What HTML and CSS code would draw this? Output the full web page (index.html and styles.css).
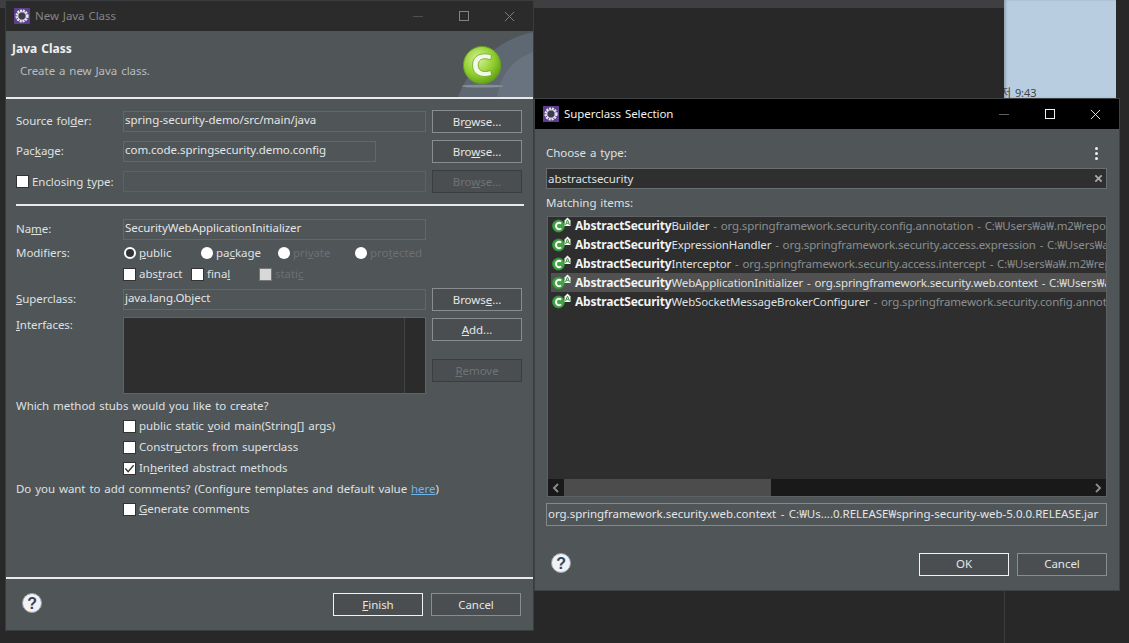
FILE: index.html
```html
<!DOCTYPE html>
<html lang="en">
<head>
<meta charset="utf-8">
<title>New Java Class</title>
<link rel="stylesheet" href="styles.css">
</head>
<body>
<div class="desktop">
  <div class="top-strip"></div>
  <div class="note"><span class="note-time">저 9:43</span></div>
  <div class="vline"></div>

  <section class="window win-class">
    <header class="titlebar titlebar-off">
      <svg class="app-icon" viewBox="0 0 16 16"><rect width="16" height="16" fill="#5b3f8c"/><circle cx="8" cy="8" r="5.4" fill="none" stroke="#e8e8e8" stroke-width="2.4" stroke-dasharray="2 .85"/><circle cx="8" cy="8" r="4.2" fill="#3c3c52" stroke="#f0f0f0" stroke-width="1"/></svg>
      <span class="title-text">New Java Class</span>
      <span class="controls"><i class="ctl-min"></i><i class="ctl-max"></i><svg class="ctl-x" viewBox="0 0 12 12"><path d="M1 1 11 11M11 1 1 11" stroke="currentColor" fill="none"/></svg></span>
    </header>
    <div class="banner">
      <svg class="banner-art" viewBox="0 0 80 66"><path d="M5 66C15 40 40 10 80 1V66Z" fill="#5e6872"/><path d="M44 66C46 50 55 30 80 21V66Z" fill="#69737f"/></svg>
      <div class="banner-text">
        <h1>Java Class</h1>
        <p>Create a new Java class.</p>
      </div>
      <svg class="banner-icon" viewBox="0 0 44 46">
        <defs><radialGradient id="g" cx=".4" cy=".35" r=".7"><stop offset="0" stop-color="#d8f39a"/><stop offset=".6" stop-color="#8fce2c"/><stop offset="1" stop-color="#5c9c14"/></radialGradient></defs>
        <ellipse cx="21" cy="42" rx="22" ry="1.500" fill="#9a9fa0" opacity=".7"/>
        <circle cx="21" cy="20" r="19.5" fill="url(#g)" stroke="#6aa01c"/>
        <path d="M31 9.5C22 6 11 9 11 20S22 34 31 30.5L30 25.5C24 28 17 27 17 20S24 12 30 14.5Z" fill="#f1f8e6" stroke="#6aa01c" stroke-width=".8"/>
      </svg>
    </div>
    <div class="rule-white"></div>
    <div class="form">
      <div class="row row-first">
        <label class="lbl">Source fol<u>d</u>er:</label>
        <div class="field">spring-security-demo/src/main/java</div>
        <button class="btn">Br<u>o</u>wse...</button>
      </div>
      <div class="row">
        <label class="lbl">Pac<u>k</u>age:</label>
        <div class="field field-short">com.code.springsecurity.demo.config</div>
        <button class="btn">Bro<u>w</u>se...</button>
      </div>
      <div class="row">
        <label class="check-lbl"><i class="box"></i><span>Enclosing <u>t</u>ype:</span></label>
        <div class="field field-off"></div>
        <button class="btn btn-off">Bro<u>w</u>se...</button>
      </div>
      <div class="divider"></div>
      <div class="row row-name">
        <label class="lbl">Na<u>m</u>e:</label>
        <div class="field">SecurityWebApplicationInitializer</div>
      </div>
      <div class="row-mod">
        <label class="lbl-plain">Modifiers:</label>
        <div class="mods">
          <span class="opt opt-a"><i class="radio radio-on"></i><span><u>p</u>ublic</span></span>
          <span class="opt opt-a"><i class="radio"></i><span>pa<u>c</u>kage</span></span>
          <span class="opt opt-a off"><i class="radio"></i><span>pri<u>v</u>ate</span></span>
          <span class="opt opt-a off"><i class="radio"></i><span>pro<u>t</u>ected</span></span>
        </div>
      </div>
      <div class="row-mod2">
        <span class="lbl-plain"></span>
        <div class="mods">
          <span class="opt opt-b"><i class="box"></i><span>abs<u>t</u>ract</span></span>
          <span class="opt opt-b"><i class="box"></i><span>fina<u>l</u></span></span>
          <span class="opt opt-b off"><i class="box box-off"></i><span>stati<u>c</u></span></span>
        </div>
      </div>
      <div class="row row-super">
        <label class="lbl"><u>S</u>uperclass:</label>
        <div class="field">java.lang.Object</div>
        <button class="btn">Brows<u>e</u>...</button>
      </div>
      <div class="row-iface">
        <label class="lbl-plain"><u>I</u>nterfaces:</label>
        <div class="listbox"><div class="listbar"></div></div>
        <div class="btn-col">
          <button class="btn"><u>A</u>dd...</button>
          <button class="btn btn-off"><u>R</u>emove</button>
        </div>
      </div>
      <p class="line line-q">Which method stubs would you like to create?</p>
      <div class="checks">
        <span class="opt"><i class="box"></i><span>public static <u>v</u>oid main(String[] args)</span></span>
        <span class="opt"><i class="box"></i><span>Constr<u>u</u>ctors from superclass</span></span>
        <span class="opt"><i class="box box-on"><svg viewBox="0 0 12 12"><path d="M1.5 6 4.5 9.5 10.5 2.5" fill="none" stroke="#333" stroke-width="1.4"/></svg></i><span>In<u>h</u>erited abstract methods</span></span>
      </div>
      <p class="line line-c">Do you want to add comments? (Configure templates and default value <a class="link">here</a>)</p>
      <div class="checks checks-c">
        <span class="opt"><i class="box"></i><span><u>G</u>enerate comments</span></span>
      </div>
    </div>
    <div class="rule-white"></div>
    <footer class="foot">
      <svg class="help" viewBox="0 0 20 20"><circle cx="10" cy="10" r="9.500" fill="#f0f2f5" stroke="#9aa0a6"/><text x="10" y="15.500" class="help-q">?</text></svg>
      <div class="foot-btns">
        <button class="btn btn-def"><u>F</u>inish</button>
        <button class="btn">Cancel</button>
      </div>
    </footer>
  </section>

  <section class="window win-super">
    <header class="titlebar titlebar-on">
      <svg class="app-icon" viewBox="0 0 16 16"><rect width="16" height="16" fill="#5b3f8c"/><circle cx="8" cy="8" r="5.4" fill="none" stroke="#e8e8e8" stroke-width="2.4" stroke-dasharray="2 .85"/><circle cx="8" cy="8" r="4.2" fill="#3c3c52" stroke="#f0f0f0" stroke-width="1"/></svg>
      <span class="title-text">Superclass Selection</span>
      <span class="controls"><i class="ctl-min"></i><i class="ctl-max"></i><svg class="ctl-x" viewBox="0 0 12 12"><path d="M1 1 11 11M11 1 1 11" stroke="currentColor" fill="none"/></svg></span>
    </header>
    <div class="sel-body">
      <div class="choose"><span>Choose a type:</span><span class="dots"><i></i><i></i><i></i></span></div>
      <div class="search"><span>abstractsecurity</span><svg class="clear" viewBox="0 0 10 10"><path d="M1.5 1.5 8.5 8.5M8.5 1.5 1.5 8.5" stroke="#a8a8a8" stroke-width="2"/></svg></div>
      <p class="match-lbl">Matching items:</p>
      <div class="results">
        <ul class="items">
          <li class="item"><svg class="cls" viewBox="0 0 22 16"><use href="#cls-icon"/></svg><b>AbstractSecurity</b><span>Builder</span><em> - org.springframework.security.config.annotation - C:₩Users₩a₩.m2₩repository₩org</em></li>
          <li class="item"><svg class="cls" viewBox="0 0 22 16"><use href="#cls-icon"/></svg><b>AbstractSecurity</b><span>ExpressionHandler</span><em> - org.springframework.security.access.expression - C:₩Users₩a₩.m2₩repository</em></li>
          <li class="item"><svg class="cls" viewBox="0 0 22 16"><use href="#cls-icon"/></svg><b>AbstractSecurity</b><span>Interceptor</span><em> - org.springframework.security.access.intercept - C:₩Users₩a₩.m2₩repository₩org</em></li>
          <li class="item item-sel"><svg class="cls" viewBox="0 0 22 16"><use href="#cls-icon"/></svg><b>AbstractSecurity</b><span>WebApplicationInitializer</span><em> - org.springframework.security.web.context - C:₩Users₩a₩.m2₩repository₩org</em></li>
          <li class="item"><svg class="cls" viewBox="0 0 22 16"><use href="#cls-icon"/></svg><b>AbstractSecurity</b><span>WebSocketMessageBrokerConfigurer</span><em> - org.springframework.security.config.annotation.web</em></li>
        </ul>
        <div class="hscroll">
          <svg class="arrow" viewBox="0 0 16 16"><path d="M10 4 6 8 10 12" fill="none" stroke="#8a8a8a" stroke-width="2"/></svg>
          <div class="track"><div class="thumb"></div></div>
          <svg class="arrow" viewBox="0 0 16 16"><path d="M6 4 10 8 6 12" fill="none" stroke="#8a8a8a" stroke-width="2"/></svg>
        </div>
      </div>
      <div class="status">org.springframework.security.web.context - C:₩Us....0.RELEASE₩spring-security-web-5.0.0.RELEASE.jar</div>
      <footer class="sel-foot">
        <svg class="help" viewBox="0 0 20 20"><circle cx="10" cy="10" r="9.500" fill="#f0f2f5" stroke="#9aa0a6"/><text x="10" y="15.500" class="help-q">?</text></svg>
        <div class="sel-btns">
          <button class="btn btn-def">OK</button>
          <button class="btn">Cancel</button>
        </div>
      </footer>
    </div>
  </section>

  <svg class="defs" width="0" height="0"><defs><g id="cls-icon"><circle cx="6.500" cy="9" r="6.500" fill="#2f8a35"/><circle cx="6.500" cy="9" r="5.500" fill="#46a247"/><path d="M9.200 6.500C6.800 5 4 6.300 4 9S6.800 13 9.200 11.500" fill="none" stroke="#fff" stroke-width="2"/><path d="M15.500 .5 12.500 3.500V9H18.500V3.500Z" fill="#f4f4f4"/><path d="M13.500 8 15.500 3 17.500 8M14.300 6.300H16.700" fill="none" stroke="#3f9a3b" stroke-width="1"/></g></defs></svg>
</div>
</body>
</html>
```
FILE: styles.css
```css
* { box-sizing: border-box; }
html, body { margin: 0; padding: 0; }
body { width: 1129px; height: 643px; overflow: hidden; background: #282828; font-family: "Noto Sans", "Noto Sans CJK KR", sans-serif; font-size: 11.5px; letter-spacing: -.05px; word-spacing: 1px; color: #dfe1e2; }
.desktop { position: relative; width: 1129px; height: 643px; overflow: hidden; }
.defs { position: absolute; }
.top-strip { height: 8px; width: 1004px; background: #3f3f41; }
.note { position: absolute; left: 1004px; top: 0; width: 112px; height: 98px; background: #b9cde0; overflow: hidden; box-shadow: inset 2px 0 2px #9aa9b8; }
.note-time { position: absolute; left: -3px; top: 86px; font-size: 11px; color: #444; line-height: 14px; white-space: nowrap; }
.vline { position: absolute; left: 1004px; top: 98px; width: 1px; height: 545px; background: #3c3c3c; }

.window { position: absolute; background: #505558; border: 1px solid #3a3d3f; display: flex; flex-direction: column; }
.win-class { left: 5px; top: 0; width: 529px; height: 631px; }
.win-super { left: 534px; top: 98px; width: 586px; height: 493px; border-color: #3f4244; }

.titlebar { height: 30px; flex: none; display: flex; align-items: center; padding-left: 8px; }
.titlebar-off { background: #2b2b2b; color: #858585; }
.titlebar-on { background: #000; color: #f0f0f0; }
.app-icon { width: 16px; height: 16px; flex: none; }
.title-text { margin-left: 5px; padding-bottom: 2px; }
.controls { margin-left: auto; display: flex; align-items: center; color: inherit; }
.ctl-min { display: block; width: 10px; height: 1px; background: currentColor; opacity: .4; margin-right: 36px; }
.ctl-max { display: block; width: 10px; height: 10px; border: 1px solid currentColor; margin-right: 35px; }
.ctl-x { display: block; width: 11px; height: 11px; margin-right: 18px; }

.banner { position: relative; height: 66px; flex: none; background: #505558; padding: 10px 6px 0 6px; overflow: hidden; }
.banner-art { position: absolute; right: 0; top: 0; width: 80px; height: 66px; }
.banner-text { position: relative; }
.banner-text h1 { margin: 0; font-size: 12px; line-height: 16px; font-weight: 700; color: #f0f0f0; letter-spacing: 0; }
.banner-text p { margin: 6px 0 0 8px; line-height: 16px; color: #b9bdbf; }
.banner-icon { position: absolute; left: 456px; top: 15px; width: 42px; height: 44px; }
.rule-white { height: 2px; flex: none; background: #eaeaea; }

.form { flex: 1; padding: 0 10px; min-height: 0; }
.row { display: grid; grid-template-columns: 107px 303px 96px; height: 23px; margin-top: 7px; align-items: stretch; }
.row-first { margin-top: 11px; }
.row .btn { margin-left: 6px; }
.lbl { display: block; line-height: 22px; white-space: nowrap; }
.lbl-plain { display: block; line-height: 16px; white-space: nowrap; }
.check-lbl { display: flex; align-items: center; line-height: 16px; white-space: nowrap; }
.check-lbl .box { margin-right: 3px; }
.field { height: 21px; margin-top: 1px; border: 1px solid #626769; background: #505558; line-height: 15px; padding: 0 1px; white-space: nowrap; overflow: hidden; color: #e4e6e7; }
.field-short { width: 253px; }
.field-off { border-color: #5c6163; }
.btn { font: inherit; letter-spacing: inherit; color: #e4e6e7; background: #4a4e50; border: 1px solid #898d8f; height: 23px; width: 90px; padding: 0; line-height: 16px; }
.btn-off { color: #6f7376; border-color: #3b3e40; }
.btn-def { border-color: #f2f2f2; }

.divider { height: 2px; background: #e8e8e8; margin-top: 11px; margin-right: -1px; }
.row-name { margin-top: 12px; grid-template-columns: 107px 303px; }
.row-mod { display: grid; grid-template-columns: 107px 1fr; height: 16px; margin-top: 4px; }
.row-mod2 { display: grid; grid-template-columns: 107px 1fr; height: 16px; margin-top: 5px; }
.mods { display: flex; }
.opt { display: flex; align-items: center; height: 16px; line-height: 16px; white-space: nowrap; }
.opt.off { color: #6c7073; }
.opt-a { width: 77px; }
.opt-b { width: 68px; }
.box { display: block; flex: none; width: 13px; height: 13px; background: #fff; border: 1px solid #333; margin-right: 3px; }
.box-off { background: #d8d8d8; border-color: #777; }
.box svg { display: block; width: 11px; height: 11px; }
.radio { display: block; flex: none; width: 12px; height: 12px; border-radius: 50%; background: #fff; margin: 0 3px 0 1px; }
.radio-on { background: #333; border: 2px solid #fff; }
.row-super { margin-top: 6px; }
.row-iface { display: grid; grid-template-columns: 107px 303px 96px; margin-top: 6px; height: 77px; }
.listbox { background: #2e2e2e; border: 1px solid #5f6466; display: flex; justify-content: flex-end; }
.listbar { width: 21px; border-left: 1px solid #3f4448; background: #2b2b2b; }
.btn-col { display: flex; flex-direction: column; gap: 18px; padding: 1px 0 0 6px; }
.line { margin: 0; line-height: 16px; white-space: nowrap; }
.line-q { margin-top: 4px; }
.line-c { margin-top: 5px; }
.checks { display: flex; flex-direction: column; gap: 5px; margin-left: 107px; margin-top: 4px; }
.checks-c { margin-top: 4px; }
.link { color: #6fb3e8; text-decoration: underline; }
.foot { height: 51px; flex: none; display: flex; align-items: center; padding: 0 12px 0 16px; }
.help { width: 20px; height: 20px; flex: none; display: block; }
.foot .help { margin-top: -4px; }
.help-q { font-family: "Liberation Sans", sans-serif; font-weight: 700; font-size: 16px; text-anchor: middle; fill: #38425a; }
.foot-btns { margin-left: auto; display: flex; gap: 8px; }

.sel-body { flex: 1; min-height: 0; padding: 0 12px 0 11px; display: flex; flex-direction: column; }
.choose { display: flex; justify-content: space-between; align-items: center; height: 16px; margin-top: 16px; line-height: 16px; }
.dots { display: flex; flex-direction: column; gap: 2px; margin-right: 9px; }
.dots i { display: block; width: 3px; height: 3px; border-radius: 50%; background: #f0f0f0; }
.search { height: 21px; margin-top: 7px; background: #2f2f2f; border: 1px solid #696e70; display: flex; align-items: center; justify-content: space-between; padding: 0 3px 0 1px; }
.search span { line-height: 17px; padding-bottom: 1px; }
.clear { width: 9px; height: 9px; }
.match-lbl { margin: 6px 0 0; line-height: 16px; height: 16px; }
.results { height: 281px; margin: 5px 0 0 1px; background: #2e2e2e; border: 1px solid #5c6163; display: flex; flex-direction: column; }
.items { list-style: none; margin: -1px 0 0; padding: 0 0 0 3px; flex: 1; overflow: hidden; }
.item { height: 19px; line-height: 18px; white-space: nowrap; display: flex; align-items: center; padding-left: 1px; overflow: hidden; }
.item b { font-weight: 700; font-size: 12px; color: #f2f2f2; letter-spacing: -.2px; }
.item span { color: #dfe1e2; letter-spacing: -.12px; }
.item em { font-style: normal; color: #8a8e90; white-space: pre; letter-spacing: -.14px; }
.item-sel { background: #515151; }
.item-sel em { color: #dfe1e2; }
.cls { width: 22px; height: 16px; flex: none; margin: -2px 1px 0 0; }
.hscroll { height: 17px; flex: none; background: #191919; display: flex; align-items: center; }
.arrow { width: 16px; height: 16px; flex: none; }
.track { flex: 1; height: 100%; }
.thumb { width: 207px; height: 100%; background: #4c4c4c; }
.status { height: 23px; margin-top: 6px; border: 1px solid #84898b; line-height: 20px; padding: 0 1px; white-space: nowrap; overflow: hidden; color: #e4e6e7; letter-spacing: -.02px; word-spacing: 1.5px; }
.sel-foot { display: flex; align-items: center; margin-top: 26px; padding-left: 5px; height: 24px; }
.sel-foot .help { margin-top: -2px; }
.sel-btns { margin-left: auto; display: flex; gap: 8px; }
```
